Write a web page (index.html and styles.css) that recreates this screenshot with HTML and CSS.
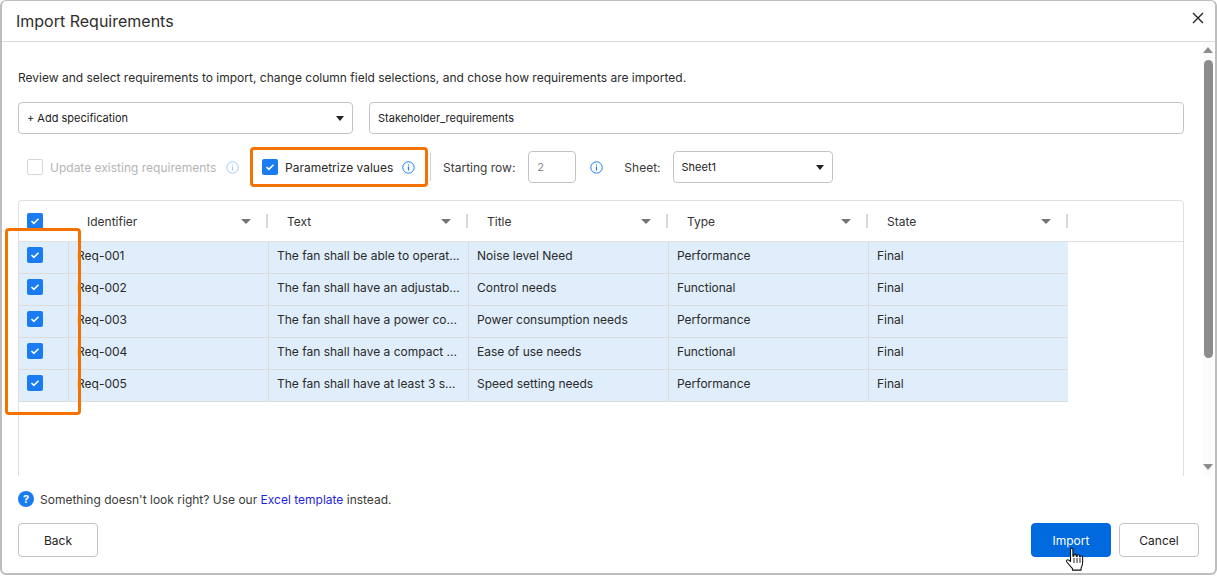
FILE: index.html
```html
<!DOCTYPE html>
<html>
<head>
    <title>Import Requirements</title>
    <link rel="stylesheet" href="styles.css">
</head>
<body>
    <div class="dialog">
        <header class="dialog_head">
            <h1>Import Requirements</h1>
            <svg class="close" width="12" height="12" viewBox="0 0 12 12"><path d="M1 1l10 10M11 1L1 11" stroke="#222" stroke-width="1.4" fill="none"/></svg>
        </header>

        <div class="scroller">
            <main class="content">
                <p class="intro">Review and select requirements to import, change column field selections, and chose how requirements are imported.</p>

                <div class="spec_row">
                    <div class="select spec_select">
                        <span>+ Add specification</span>
                        <i class="caret"></i>
                    </div>
                    <div class="text_input">Stakeholder_requirements</div>
                </div>

                <div class="options">
                    <label class="option disabled">
                        <span class="check off"></span>
                        <span>Update existing requirements</span>
                        <svg class="info" width="13" height="13" viewBox="0 0 13 13"><circle cx="6.5" cy="6.5" r="5.7" fill="none" stroke="#1a7cf0" stroke-width="1"/><path d="M6.5 5.6v3.9M6.5 3.4v1.1" stroke="#1a7cf0" stroke-width="1.2"/></svg>
                    </label>
                    <label class="option highlight">
                        <span class="check"><svg width="10" height="8" viewBox="0 0 10 8"><path d="M1.5 4l2.4 2.3 4.6-4.6" stroke="#fff" stroke-width="1.6" fill="none"/></svg></span>
                        <span>Parametrize values</span>
                        <svg class="info" width="13" height="13" viewBox="0 0 13 13"><circle cx="6.5" cy="6.5" r="5.7" fill="none" stroke="#1a7cf0" stroke-width="1"/><path d="M6.5 5.6v3.9M6.5 3.4v1.1" stroke="#1a7cf0" stroke-width="1.2"/></svg>
                    </label>
                    <span class="divider"></span>
                    <span class="field_label">Starting row:</span>
                    <div class="num_input">2</div>
                    <svg class="info row_info" width="13" height="13" viewBox="0 0 13 13"><circle cx="6.5" cy="6.5" r="5.7" fill="none" stroke="#1a7cf0" stroke-width="1"/><path d="M6.5 5.6v3.9M6.5 3.4v1.1" stroke="#1a7cf0" stroke-width="1.2"/></svg>
                    <span class="field_label sheet_label">Sheet:</span>
                    <div class="select sheet_select">
                        <span>Sheet1</span>
                        <i class="caret"></i>
                    </div>
                </div>

                <div class="table_wrap">
                    <div class="grid head_row">
                        <div class="check_cell"><span class="check"><svg width="10" height="8" viewBox="0 0 10 8"><path d="M1.5 4l2.4 2.3 4.6-4.6" stroke="#fff" stroke-width="1.6" fill="none"/></svg></span></div>
                        <div class="head_cell">Identifier<i class="sort"></i></div>
                        <div class="head_cell">Text<i class="sort"></i></div>
                        <div class="head_cell">Title<i class="sort"></i></div>
                        <div class="head_cell">Type<i class="sort"></i></div>
                        <div class="head_cell">State<i class="sort"></i></div>
                    </div>
                    <div id="rows"></div>
                </div>
            </main>

            <div class="scrollbar">
                <i class="arrow_up"></i>
                <div class="thumb"></div>
                <i class="arrow_down"></i>
            </div>
        </div>

        <p class="help">
            <span class="help_icon">?</span>
            <span>Something doesn't look right? Use our <a href="#">Excel template</a> instead.</span>
        </p>

        <footer class="actions">
            <button class="btn">Back</button>
            <button class="btn primary">Import</button>
            <button class="btn cancel">Cancel</button>
        </footer>

        <div class="row_highlight"></div>
        <svg class="pointer" width="20" height="25" viewBox="0 0 20 25">
            <path d="M5.5 2.2c0-1.400 2.400-1.400 2.400 0v7l1-.1v-1c0-1.200 2.200-1.200 2.300 0v1.200l1 .1v-.8c0-1.200 2.200-1.200 2.300.1l.1 1h.8c0-1 2.200-1 2.200.4v5.600c0 2.600-.7 3.700-1.500 5.400v2H7.500v-1.500L1.800 15c-1-1.300.7-3 2-1.900l1.700 1.400z" fill="#fff" stroke="#111" stroke-width="1.100" stroke-linejoin="round"/>
            <path d="M9 11v5M12 11v5M15 11v5" stroke="#111" stroke-width=".9"/>
        </svg>
    </div>

    <script>
        const rows = [
            ['Req-001', 'The fan shall be able to operat...', 'Noise level Need', 'Performance', 'Final'],
            ['Req-002', 'The fan shall have an adjustab...', 'Control needs', 'Functional', 'Final'],
            ['Req-003', 'The fan shall have a power co...', 'Power consumption needs', 'Performance', 'Final'],
            ['Req-004', 'The fan shall have a compact ...', 'Ease of use needs', 'Functional', 'Final'],
            ['Req-005', 'The fan shall have at least 3 s...', 'Speed setting needs', 'Performance', 'Final']
        ];

        const holder = document.querySelector('#rows');
        rows.forEach(function (row) {
            const cells = row.map(text => '<div class="cell">' + text + '</div>').join('');
            holder.insertAdjacentHTML('beforeend',
                '<div class="grid data_row"><div class="check_cell"><span class="check">' +
                '<svg width="10" height="8" viewBox="0 0 10 8"><path d="M1.5 4l2.4 2.3 4.6-4.6" stroke="#fff" stroke-width="1.6" fill="none"/></svg>' +
                '</span></div>' + cells + '</div>');
        });
    </script>
</body>
</html>
```

FILE: styles.css
```css
* {
    box-sizing: border-box;
}
body {
    margin: 0;
    background: #fff;
    font-family: Inter, "Liberation Sans", sans-serif;
    font-size: 12px;
    color: #2b2b2b;
}
.dialog {
    position: relative;
    width: 1217px;
    height: 575px;
    border: solid #bdbdbd;
    border-width: 1px 2px 2px 2px;
    border-radius: 6px;
    overflow: hidden;
    display: flex;
    flex-direction: column;
}
.dialog_head {
    height: 41px;
    flex: none;
    padding: 0 11px 0 14px;
    border-bottom: 1px solid #dcdcdc;
    display: flex;
    align-items: center;
    justify-content: space-between;
}
.dialog_head h1 {
    margin: 0;
    font-size: 16px;
    font-weight: 400;
    color: #2e2e2e;
}
.close {
    margin-bottom: 6px;
}
.scroller {
    height: 434px;
    flex: none;
    display: flex;
    overflow: hidden;
}
.content {
    flex: 1;
    padding: 0 19px 0 16px;
    min-width: 0;
}
.intro {
    margin: 27px 0 0;
    height: 17px;
    line-height: 17px;
    font-size: 12px;
}
.spec_row {
    margin-top: 16px;
    display: flex;
    gap: 16px;
}
.select, .text_input, .num_input {
    height: 32px;
    border: 1px solid #c4c4c4;
    border-radius: 4px;
    display: flex;
    align-items: center;
    padding: 0 8px;
    font-size: 11px;
    color: #222;
}
.select {
    justify-content: space-between;
}
.spec_select {
    width: 335px;
}
.text_input {
    flex: 1;
}
.caret {
    width: 0;
    height: 0;
    border: 4px solid transparent;
    border-top: 5px solid #222;
    border-bottom: 0;
}
.options {
    margin-top: 13px;
    height: 40px;
    display: flex;
    align-items: center;
}
.option {
    display: flex;
    align-items: center;
    font-size: 12px;
}
.option.disabled {
    width: 232px;
    padding-left: 9px;
    color: #b5b5b5;
}
.option.disabled .check {
    margin-right: 7px;
}
.option.disabled .info {
    margin-left: 10px;
    opacity: .4;
}
.highlight {
    width: 178px;
    height: 40px;
    padding-left: 9px;
    border: 3px solid #f57200;
    border-radius: 4px;
}
.highlight .check {
    margin-right: 7px;
}
.highlight .info {
    margin-left: 9px;
}
.check {
    width: 16px;
    height: 16px;
    border-radius: 2px;
    background: #1a7cf0;
    display: inline-flex;
    align-items: center;
    justify-content: center;
    flex: none;
}
.check.off {
    background: #fff;
    border: 1px solid #d6d6d6;
}
.divider {
    width: 1px;
    height: 28px;
    background: #d0d0d0;
    margin: 0 12px 0 2px;
}
.field_label {
    font-size: 12px;
    color: #3a3a3a;
}
.num_input {
    width: 48px;
    margin-left: 13px;
    color: #8a8a8a;
}
.row_info {
    margin-left: 14px;
}
.sheet_label {
    margin-left: 21px;
}
.sheet_select {
    width: 160px;
    margin-left: 12px;
}
.table_wrap {
    margin-top: 13px;
    height: 290px;
    border: 1px solid #e0e0e0;
    border-bottom: 0;
    border-radius: 4px 4px 0 0;
}
.grid {
    display: grid;
    grid-template-columns: 49px repeat(5, 200px);
}
.check_cell {
    display: flex;
    align-items: center;
    padding-left: 8px;
}
.head_row {
    height: 41px;
    border-bottom: 1px solid #e0e0e0;
}
.head_cell {
    padding: 0 1px 0 19px;
    display: flex;
    align-items: center;
    justify-content: space-between;
    font-size: 12px;
    color: #333;
    background: linear-gradient(#d8d8d8, #d8d8d8) right center / 2px 14px no-repeat;
}
.sort {
    width: 0;
    height: 0;
    border: 5px solid transparent;
    border-top: 5px solid #757575;
    border-bottom: 0;
    margin-right: 16px;
}
.data_row {
    width: 1049px;
    height: 32px;
    background: #e0eefb;
    border-bottom: 1px solid #dcdcdc;
}
.data_row .check_cell {
    padding-bottom: 5px;
}
.cell {
    padding: 0 0 5px 8px;
    display: flex;
    align-items: center;
    border-left: 1px solid #dcdcdc;
    white-space: nowrap;
    overflow: hidden;
    color: #2a2a2a;
}
.scrollbar {
    width: 10px;
    margin-right: 2px;
    background: #fbfbfb;
    display: flex;
    flex-direction: column;
    align-items: center;
    padding-top: 5px;
}
.arrow_up, .arrow_down {
    width: 0;
    height: 0;
    border: 5px solid transparent;
    flex: none;
}
.arrow_up {
    border-bottom: 6px solid #8c8c8c;
    border-top: 0;
}
.arrow_down {
    border-top: 6px solid #8c8c8c;
    border-bottom: 0;
    margin-top: 106px;
}
.thumb {
    width: 9px;
    height: 298px;
    margin-top: 7px;
    border-radius: 5px;
    background: #8c8c8c;
    flex: none;
}
.help {
    margin: 14px 0 0 16px;
    height: 18px;
    display: flex;
    align-items: center;
    font-size: 12px;
    color: #3a3a3a;
}
.help a {
    color: #1f1fe0;
    text-decoration: none;
}
.help_icon {
    width: 16px;
    height: 16px;
    border-radius: 50%;
    background: #1a7cf0;
    color: #fff;
    font-size: 11px;
    font-weight: 700;
    display: inline-flex;
    align-items: center;
    justify-content: center;
    margin-right: 6px;
}
.actions {
    margin-top: 15px;
    padding: 0 16px;
    display: flex;
    gap: 8px;
}
.btn {
    width: 80px;
    height: 34px;
    border: 1px solid #c4c4c4;
    border-radius: 4px;
    background: #fff;
    font: 12px Inter, "Liberation Sans", sans-serif;
    color: #222;
}
.primary {
    margin-left: auto;
    border-color: #0069de;
    background: #0069de;
    color: #fff;
}
.row_highlight {
    position: absolute;
    left: 3px;
    top: 227px;
    width: 76px;
    height: 187px;
    border: 3px solid #f57200;
    border-radius: 4px;
    pointer-events: none;
}
.pointer {
    position: absolute;
    left: 1063px;
    top: 546px;
}
```
